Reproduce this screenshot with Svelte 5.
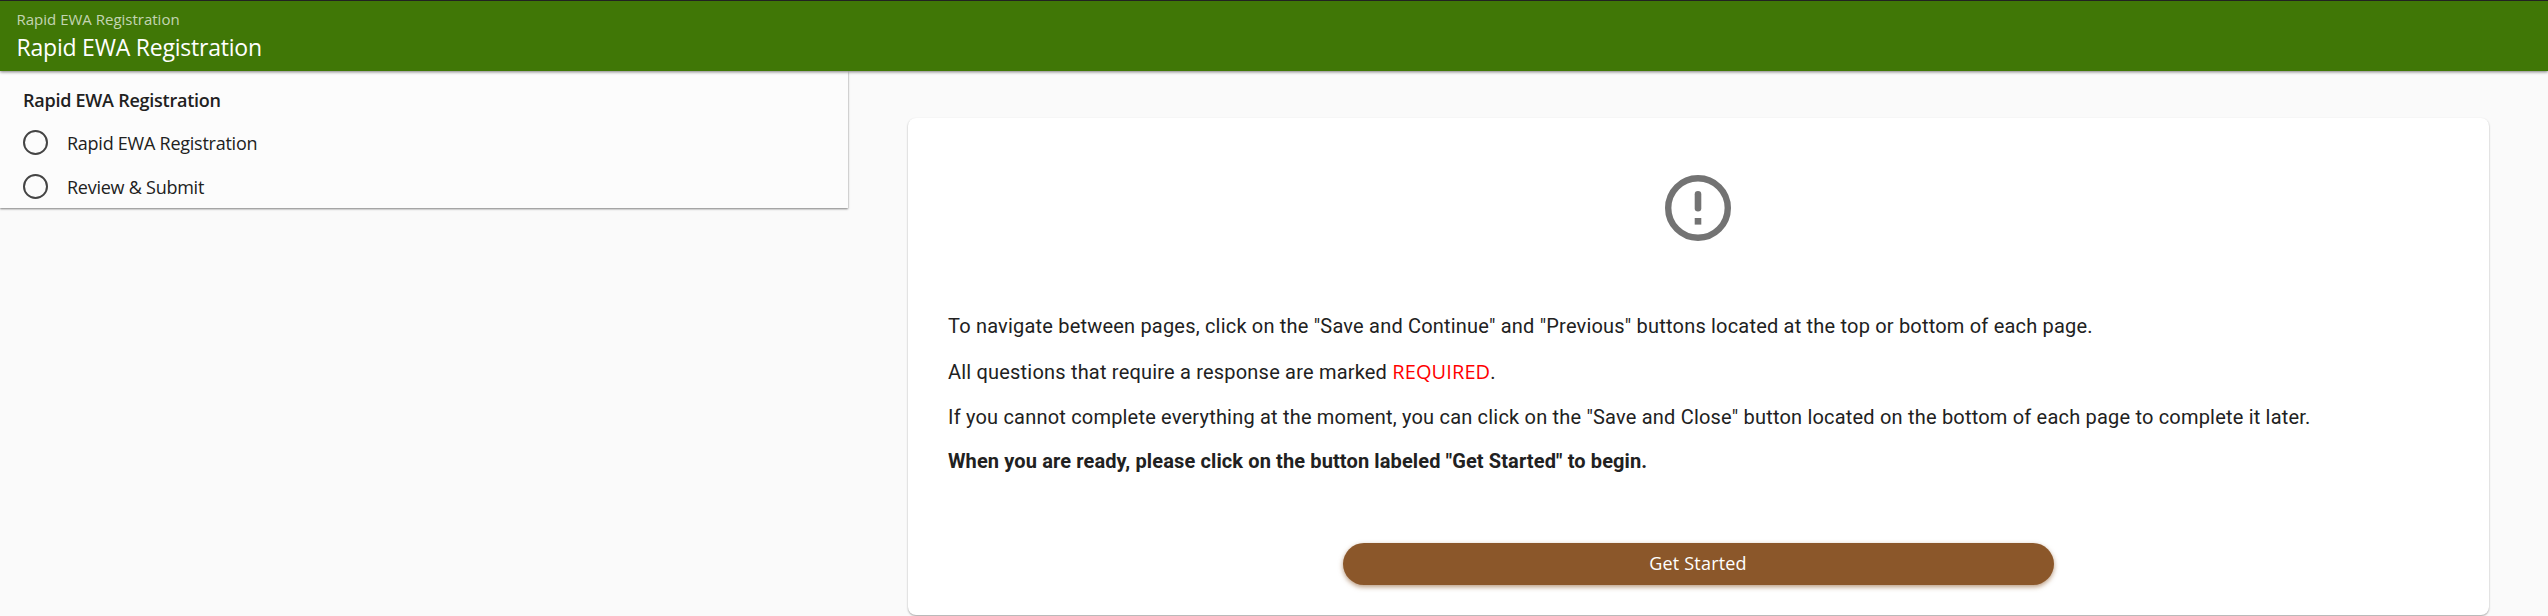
<script lang="ts">
    const title = "Rapid EWA Registration";
    const steps = ["Rapid EWA Registration", "Review & Submit"];
</script>

<div class="page">
    <header>
        <span class="crumb">{title}</span>
        <h1>{title}</h1>
    </header>
    <div class="body">
        <nav>
            <h2>{title}</h2>
            {#each steps as step}
                <a class="step" href="#top">
                    <span class="circle"></span>
                    <span>{step}</span>
                </a>
            {/each}
        </nav>
        <main>
            <div class="card">
                <svg class="alert" viewBox="0 0 66 66" aria-hidden="true">
                    <circle cx="33" cy="33" r="29.8" fill="none" stroke="#737373" stroke-width="6.4" />
                    <rect x="29.7" y="16" width="6.6" height="20.5" rx="3.3" fill="#737373" />
                    <rect x="29.7" y="43" width="6.6" height="6.6" fill="#737373" />
                </svg>
                <div class="info">
                    <p class="nav-info">To navigate between pages, click on the "Save and Continue" and "Previous" buttons located at the top or bottom of each page.</p>
                    <p>All questions that require a response are marked <span class="required">REQUIRED</span>.</p>
                    <p>If you cannot complete everything at the moment, you can click on the "Save and Close" button located on the bottom of each page to complete it later.</p>
                    <p class="ready">When you are ready, please click on the button labeled "Get Started" to begin.</p>
                </div>
                <button>Get Started</button>
            </div>
        </main>
    </div>
</div>

<style>
    :global(body) {
        margin: 0;
        background-color: #fafafa;
    }
    .page {
        height: 616px;
        overflow: hidden;
        background-color: #fafafa;
        color: #212121;
        font-family: "Open Sans", "Noto Sans", sans-serif;
    }
    header {
        box-sizing: border-box;
        position: relative;
        height: 71px;
        padding: 7px 16.5px 0;
        border-top: 1px solid #222;
        background-color: #407706;
        box-shadow: 0 1px 3px rgba(0, 0, 0, 0.5);
        color: white;
    }
    .crumb {
        display: block;
        font-size: 15px;
        line-height: 22px;
        color: rgba(255, 255, 255, 0.7);
    }
    h1 {
        margin: 0;
        font-size: 23px;
        font-weight: 400;
        line-height: 34px;
        letter-spacing: -0.22px;
    }
    .body {
        display: flex;
        align-items: flex-start;
    }
    nav {
        box-sizing: border-box;
        width: 848px;
        height: 137px;
        padding: 15px 23px 0;
        background-color: #fcfcfc;
        box-shadow: 0 1px 2px rgba(0, 0, 0, 0.5);
    }
    h2 {
        margin: 0;
        font-size: 18px;
        font-weight: 600;
        line-height: 28px;
        letter-spacing: -0.25px;
    }
    .step {
        display: flex;
        align-items: center;
        gap: 19px;
        height: 44px;
        color: #212121;
        font-size: 18px;
        letter-spacing: -0.25px;
        text-decoration: none;
    }
    .step:first-of-type {
        margin-top: 6px;
    }
    .step span:last-child {
        padding-top: 1px;
    }
    .circle {
        box-sizing: border-box;
        width: 25px;
        height: 25px;
        border: 2px solid #444;
        border-radius: 50%;
    }
    main {
        display: flex;
        flex: 1;
        justify-content: center;
        padding-top: 47px;
    }
    .card {
        box-sizing: border-box;
        display: flex;
        flex-direction: column;
        align-items: center;
        width: 93%;
        height: 497px;
        padding: 57px 40px 0;
        border-radius: 8px;
        background-color: white;
        box-shadow: 0 1px 2px rgba(0, 0, 0, 0.35);
    }
    .alert {
        width: 66px;
        height: 66px;
    }
    .info {
        box-sizing: border-box;
        width: 100%;
        margin-top: 62px;
        padding-left: 0.5px;
        font-family: Roboto, sans-serif;
        font-size: 20px;
        letter-spacing: 0.195px;
    }
    p {
        margin: 0;
        line-height: 45px;
        white-space: nowrap;
    }
    .nav-info {
        line-height: 46px;
    }
    .required {
        color: red;
        font-family: "Open Sans", sans-serif;
        letter-spacing: 0.1px;
    }
    .ready {
        font-weight: 700;
        letter-spacing: 0.12px;
        line-height: 43px;
    }
    button {
        width: 711px;
        height: 42px;
        margin-top: 60px;
        padding: 0 0 2px;
        border: none;
        border-radius: 21px;
        background-color: #8b572a;
        box-shadow: 0 2px 5px rgba(139, 87, 42, 0.6);
        color: white;
        font-family: inherit;
        font-size: 18px;
        letter-spacing: 0.2px;
    }
</style>
